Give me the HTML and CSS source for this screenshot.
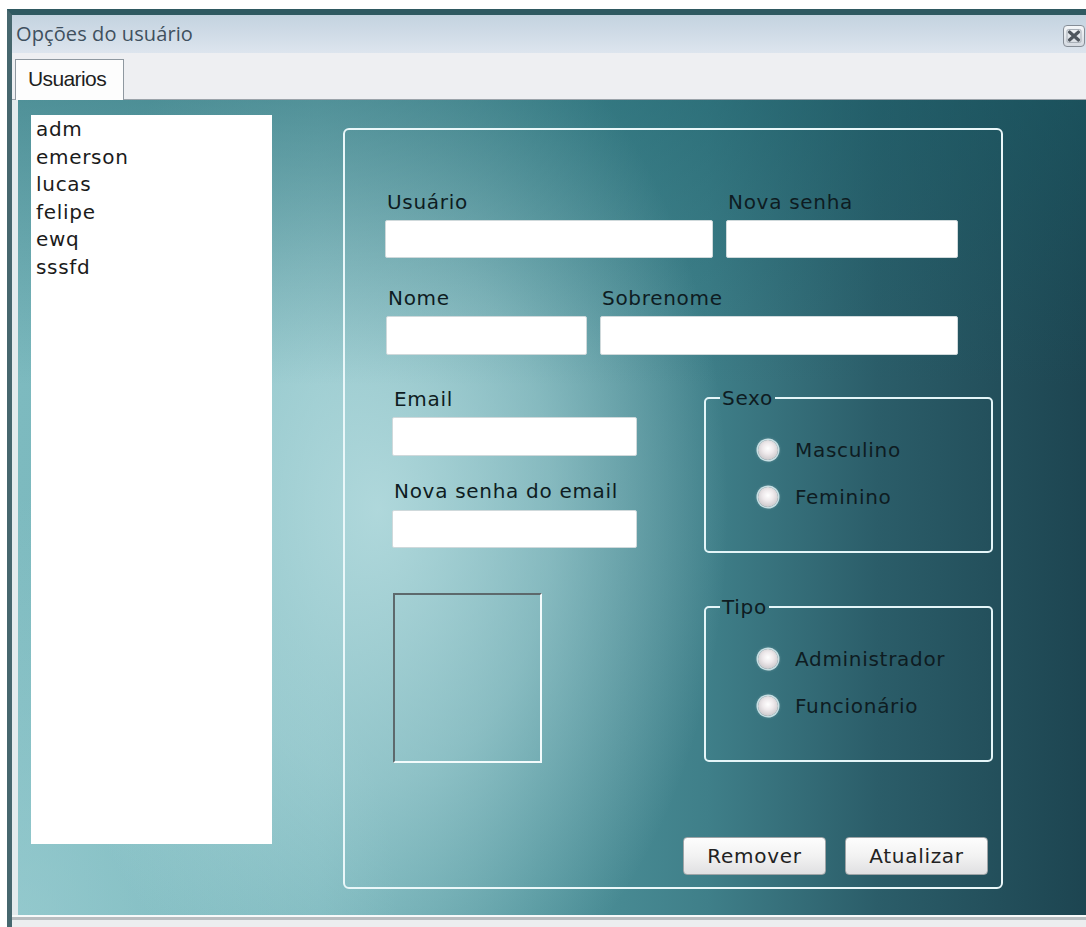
FILE: index.html
```html
<!DOCTYPE html>
<html lang="pt-BR">
<head>
<meta charset="utf-8">
<title>Opções do usuário</title>
<link rel="stylesheet" href="styles.css">
</head>
<body>
<div class="window">
  <div class="titlebar">
    <span class="title">Opções do usuário</span>
    <svg class="close-btn" width="22" height="22" viewBox="0 0 22 22" aria-label="Fechar">
      <defs>
        <linearGradient id="closeFill" x1="0" y1="0" x2="0" y2="1">
          <stop offset="0" stop-color="#f6f8fa"/>
          <stop offset="1" stop-color="#d3d9e0"/>
        </linearGradient>
      </defs>
      <rect x="0.5" y="0.5" width="21" height="21" rx="3.5" fill="url(#closeFill)" stroke="#858d96"/>
      <rect x="4" y="4.5" width="14" height="13" rx="1.5" fill="none" stroke="#a9b0b8"/>
      <path d="M6.5 7 L15.5 15 M15.5 7 L6.5 15" stroke="#4f565e" stroke-width="3.2" stroke-linecap="round"/>
    </svg>
  </div>

  <div class="tabstrip">
    <div class="tab">Usuarios</div>
  </div>

  <div class="content">
    <ul class="userlist">
      <li>adm</li>
      <li>emerson</li>
      <li>lucas</li>
      <li>felipe</li>
      <li>ewq</li>
      <li>sssfd</li>
    </ul>

    <form class="panel">
      <div class="row row-top">
        <div class="field f-usuario">
          <label>Usuário</label>
          <input type="text">
        </div>
        <div class="field f-senha">
          <label>Nova senha</label>
          <input type="password">
        </div>
      </div>

      <div class="row row-name">
        <div class="field f-nome">
          <label>Nome</label>
          <input type="text" class="tall">
        </div>
        <div class="field f-sobrenome">
          <label>Sobrenome</label>
          <input type="text" class="tall">
        </div>
      </div>

      <div class="lower">
        <div class="left-col">
          <div class="field">
            <label>Email</label>
            <input type="text" class="tall">
          </div>
          <div class="field f-email-senha">
            <label>Nova senha do email</label>
            <input type="password" class="email-pass">
          </div>
          <div class="photo"></div>
        </div>

        <div class="right-col">
          <fieldset class="group">
            <legend>Sexo</legend>
            <div class="options">
              <label class="radio"><input type="radio" name="sexo">Masculino</label>
              <label class="radio"><input type="radio" name="sexo">Feminino</label>
            </div>
          </fieldset>
          <fieldset class="group group-tipo">
            <legend>Tipo</legend>
            <div class="options">
              <label class="radio"><input type="radio" name="tipo">Administrador</label>
              <label class="radio"><input type="radio" name="tipo">Funcionário</label>
            </div>
          </fieldset>
        </div>
      </div>

      <div class="actions">
        <button type="button">Remover</button>
        <button type="button">Atualizar</button>
      </div>
    </form>
  </div>

  <div class="frame-bottom"></div>
</div>
</body>
</html>
```

FILE: styles.css
```css
* {
  box-sizing: border-box;
}

html, body {
  margin: 0;
  padding: 0;
}

body {
  background: #ffffff;
  width: 1086px;
  height: 927px;
  overflow: hidden;
  font-family: "DejaVu Sans", sans-serif;
}

/* outer window frame */
.window {
  margin: 9px 0 0 7px;
  height: 918px;
  border-top: 6px solid #2f5961;
  border-left: 5px solid #46676e;
  display: flex;
  flex-direction: column;
}

/* title bar */
.titlebar {
  height: 38px;
  flex: none;
  display: flex;
  align-items: center;
  justify-content: space-between;
  padding-left: 4px;
  background: linear-gradient(180deg, #c4d3e0 0%, #d2dde8 60%, #dde5ee 100%);
}

.title {
  font-family: "Open Sans", "Noto Sans", sans-serif;
  font-size: 20px;
  line-height: 38px;
  color: #3f505e;
  letter-spacing: 0.1px;
}

.close-btn {
  align-self: flex-start;
  margin-top: 10px;
  margin-right: 1px;
  display: block;
}

/* tab strip */
.tabstrip {
  height: 47px;
  flex: none;
  display: flex;
  align-items: flex-end;
  padding-left: 3px;
  background: #eeeff2;
  border-bottom: 1px solid #9aa3aa;
}

.tab {
  width: 109px;
  height: 41px;
  margin-bottom: -1px;
  padding-left: 12px;
  background: #fdfdfd;
  border: 1px solid #8f98a0;
  border-bottom: none;
  font-family: "Liberation Sans", Arial, sans-serif;
  font-size: 21px;
  letter-spacing: -0.6px;
  line-height: 38px;
  color: #1e1e1e;
}

/* main teal area: dark on the right, a pale glow round the email fields */
.content {
  height: 815px;
  flex: none;
  display: flex;
  align-items: flex-start;
  border-left: 6px solid #e4ebed;
  background:
    linear-gradient(180deg, rgba(25, 95, 105, 0.45) 0%, rgba(25, 95, 105, 0) 35%),
    radial-gradient(350px 540px at 360px 410px, rgba(188, 224, 227, 0.85) 0%, rgba(188, 224, 227, 0.5) 50%, rgba(188, 224, 227, 0) 100%),
    radial-gradient(380px 420px at 0 815px, rgba(165, 212, 216, 0.55) 0%, rgba(165, 212, 216, 0) 100%),
    linear-gradient(90deg, #7dbabf 0px, #6fb0b6 300px, #4f939b 520px, #3f7f89 690px, #2b5d69 860px, #1d4551 1068px);
}

.frame-bottom {
  flex: 1;
  background: linear-gradient(180deg, #f7fafa 0 2px, #b8bdc0 2px 5px, #eceeef 5px);
}

/* user list */
.userlist {
  list-style: none;
  flex: none;
  margin: 15px 0 0 13px;
  padding: 1px 0 0 5px;
  width: 241px;
  height: 729px;
  background: #ffffff;
  font-size: 20px;
  letter-spacing: 0.7px;
  line-height: 27.5px;
  color: #1b1b1b;
}

/* form panel */
.panel {
  flex: none;
  margin: 28px 0 0 71px;
  width: 660px;
  height: 761px;
  border: 2px solid #eaf7f9;
  border-radius: 6px;
  padding: 61px 13px 12px 40px;
  display: flex;
  flex-direction: column;
}

.row {
  display: flex;
  gap: 13px;
}

.row-name {
  margin-top: 29px;
  margin-left: 1px;
}

.field {
  display: flex;
  flex-direction: column;
  flex: none;
}

.field label,
.group legend,
.radio {
  font-size: 20px;
  letter-spacing: 0.7px;
  color: #0e1c22;
}

.field label {
  display: block;
  line-height: 22px;
  padding-left: 2px;
  margin-bottom: 7px;
}

.field input {
  display: block;
  width: 100%;
  height: 38px;
  margin: 0;
  padding: 0 6px;
  border: 1px solid #cfd9db;
  border-radius: 2px;
  background: #ffffff;
  font: inherit;
}

.field input.tall {
  height: 39px;
}

.f-usuario { width: 328px; }
.f-senha { width: 232px; }
.f-nome { width: 201px; }
.f-sobrenome { width: 358px; }

/* lower block: email fields, photo, option groups */
.lower {
  display: flex;
  margin-top: 32px;
}

.left-col {
  flex: none;
  width: 245px;
  margin-left: 7px;
  padding-top: 1px;
}

.f-email-senha {
  margin-top: 24px;
}

.f-email-senha label {
  margin-bottom: 8px;
}

.photo {
  width: 149px;
  height: 170px;
  margin: 45px 0 0 1px;
  border-style: solid;
  border-width: 2px;
  border-color: #5d696c #f3fbfc #f3fbfc #5d696c;
}

.right-col {
  flex: none;
  width: 289px;
  margin-left: 67px;
}

.group {
  margin: 0;
  padding: 26px 0 39px 0;
  border: 2px solid #e4f5f8;
  border-radius: 5px;
  min-width: 0;
}

.group-tipo {
  margin-top: 43px;
}

.group legend {
  margin-left: 14px;
  padding: 0 2px;
  line-height: 22px;
}

.options {
  display: flex;
  flex-direction: column;
  gap: 17px;
  padding-left: 52px;
}

.radio {
  display: flex;
  align-items: center;
  gap: 17px;
  height: 30px;
  line-height: 30px;
}

.radio input {
  appearance: none;
  -webkit-appearance: none;
  margin: 0;
  width: 20px;
  height: 20px;
  border-radius: 50%;
  background: radial-gradient(circle at 50% 42%, #ffffff 0%, #efeaec 35%, #c9c5c8 80%, #b3b1b4 100%);
  box-shadow: 0 0 0 1.5px rgba(235, 250, 252, 0.75), 0 0 3px 1px rgba(255, 255, 255, 0.35);
}

/* action buttons */
.actions {
  margin-top: auto;
  display: flex;
  justify-content: flex-end;
  gap: 19px;
}

.actions button {
  width: 143px;
  height: 38px;
  padding: 0;
  border: 1px solid #9ea4a7;
  border-radius: 4px;
  background: linear-gradient(180deg, #fdfdfd 0%, #f2f2f2 50%, #e0e0e2 100%);
  font-family: "DejaVu Sans", sans-serif;
  font-size: 20px;
  letter-spacing: 0.7px;
  color: #222222;
}
```
